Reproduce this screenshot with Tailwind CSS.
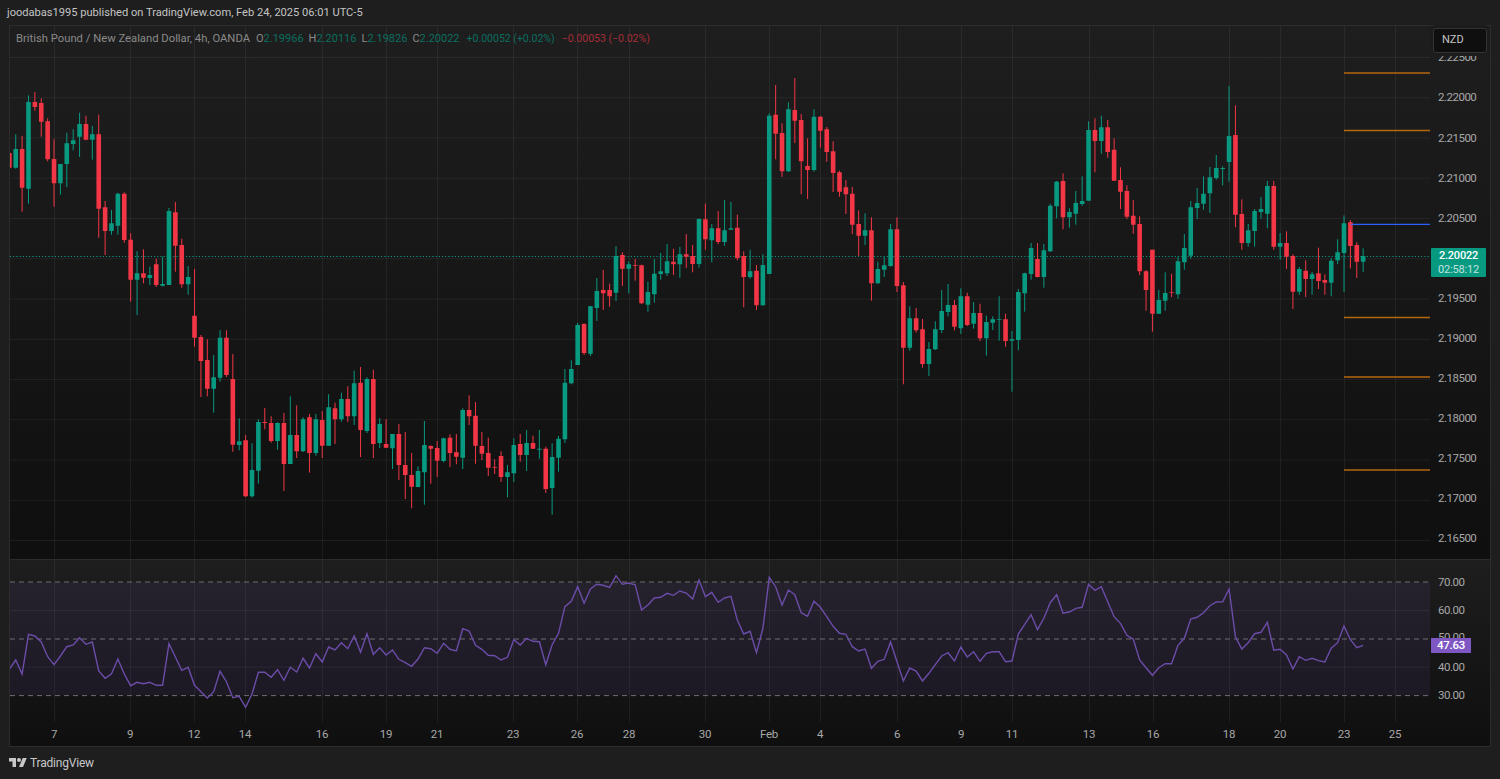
<!DOCTYPE html>
<html lang="en">
  <head>
    <meta charset="UTF-8" />
    <title>GBPNZD 4h chart</title>
    <script src="https://cdn.jsdelivr.net/npm/@tailwindcss/browser@4"></script>
  </head>
  <body class="bg-[#1e1e1e] font-['Roboto',sans-serif]">
    <div class="w-[1500px] h-[779px] overflow-hidden flex flex-col">
      <!-- published by -->
      <div class="h-[25px] pl-[7px] pt-[2px] flex items-center text-[11.1px] text-[#c4c4c4] whitespace-nowrap">
        joodabas1995 published on TradingView.com, Feb 24, 2025 06:01 UTC-5
      </div>

      <!-- chart frame -->
      <div class="relative ml-[9px] w-[1482px] h-[722px] border border-[#2c2c2c] flex flex-col">
        <!-- price pane -->
        <div class="relative h-[533px] flex bg-gradient-to-b from-[#1e1e1e] to-[#0f0f0f]">
          <svg id="priceChart" class="block shrink-0" width="1420" height="533" viewBox="10 26 1420 533">
            <g id="priceGrid" class="stroke-white/[0.06]"></g>
            <line x1="10" x2="1430" y1="256.5" y2="256.5" class="stroke-[#089981]" stroke-dasharray="1.2 2"></line>
            <path id="upWicks" class="stroke-[#089981]" fill="none"></path>
            <path id="downWicks" class="stroke-[#f23645]" fill="none"></path>
            <path id="upBodies" class="fill-[#089981]"></path>
            <path id="downBodies" class="fill-[#f23645]"></path>
            <g class="stroke-[#b5690f]" stroke-width="1.3">
              <line x1="1344" x2="1430" y1="73" y2="73"></line>
              <line x1="1344" x2="1430" y1="130.5" y2="130.5"></line>
              <line x1="1344" x2="1430" y1="317.5" y2="317.5"></line>
              <line x1="1344" x2="1430" y1="377" y2="377"></line>
              <line x1="1344" x2="1430" y1="470" y2="470"></line>
            </g>
            <line x1="1351" x2="1430" y1="224.3" y2="224.3" class="stroke-[#2962ff]" stroke-width="1.3"></line>
          </svg>

          <!-- price scale -->
          <div class="pt-[12px] pl-[8px] flex flex-col text-[11.5px] tracking-[-0.5px] text-[#a8a8a8]">
            <span class="h-[40.25px] flex items-center">2.22500</span>
            <span class="h-[40.25px] flex items-center">2.22000</span>
            <span class="h-[40.25px] flex items-center">2.21500</span>
            <span class="h-[40.25px] flex items-center">2.21000</span>
            <span class="h-[40.25px] flex items-center">2.20500</span>
            <span class="h-[40.25px]"></span>
            <span class="h-[40.25px] flex items-center">2.19500</span>
            <span class="h-[40.25px] flex items-center">2.19000</span>
            <span class="h-[40.25px] flex items-center">2.18500</span>
            <span class="h-[40.25px] flex items-center">2.18000</span>
            <span class="h-[40.25px] flex items-center">2.17500</span>
            <span class="h-[40.25px] flex items-center">2.17000</span>
            <span class="h-[40.25px] flex items-center">2.16500</span>
          </div>

          <!-- legend -->
          <div class="absolute left-[6px] top-[6px] flex text-[11px] leading-[14px] whitespace-nowrap text-[#8a8a8a]">
            <span class="text-[11.25px]">British Pound / New Zealand Dollar, 4h, OANDA</span>
            <span class="ml-[6px]">O<span class="text-[#0b6f60]">2.19966</span></span>
            <span class="ml-[5px]">H<span class="text-[#0b6f60]">2.20116</span></span>
            <span class="ml-[5px]">L<span class="text-[#0b6f60]">2.19826</span></span>
            <span class="ml-[5px]">C<span class="text-[#0b6f60]">2.20022</span></span>
            <span class="ml-[7px] text-[10.5px] text-[#0b6f60]">+0.00052 (+0.02%)</span>
            <span class="ml-[7px] text-[10.5px] text-[#a52d38]">−0.00053 (−0.02%)</span>
          </div>

          <!-- currency box -->
          <div class="absolute left-[1423px] top-[2px] w-[54px] h-[25px] pl-[8px] flex items-center rounded-[3px] border border-[#333] bg-[#0f0f0f] ring-[3px] ring-[#1c1c1c] text-[11px] text-[#c4c4c4]">
            NZD
          </div>

          <!-- last price -->
          <div class="absolute left-[1421px] top-[222px] w-[55px] h-[29px] rounded-[1px] bg-[#089981] flex flex-col items-center justify-center text-[11px] leading-[14px] tracking-[-0.2px]">
            <span class="font-medium text-white">2.20022</span>
            <span class="text-white/75">02:58:12</span>
          </div>
        </div>

        <!-- rsi pane -->
        <div class="relative h-[187px] flex border-t border-[#2c2c2c] bg-gradient-to-b from-[#1e1e1e] to-[#0f0f0f]">
          <svg id="rsiChart" class="block shrink-0" width="1420" height="186" viewBox="10 560 1420 186">
            <g id="rsiGrid" class="stroke-white/[0.06]"></g>
            <rect x="10" y="582" width="1420" height="113.6" class="fill-[#7e57c2]/[0.1]"></rect>
            <g class="stroke-[#6e6e6e]" stroke-dasharray="5 4">
              <line x1="10" x2="1430" y1="582" y2="582"></line>
              <line x1="10" x2="1430" y1="639" y2="639"></line>
              <line x1="10" x2="1430" y1="695.6" y2="695.6"></line>
            </g>
            <polyline id="rsiLine" class="stroke-[#6b4ca8]" fill="none" stroke-width="1.4"></polyline>
          </svg>

          <!-- rsi scale -->
          <div class="pt-[8px] pl-[8px] flex flex-col text-[11.5px] tracking-[-0.45px] text-[#a8a8a8]">
            <span class="h-[28.4px] flex items-center">70.00</span>
            <span class="h-[28.4px] flex items-center">60.00</span>
            <span class="h-[28.4px] flex items-center -translate-y-[1px]">50.00</span>
            <span class="h-[28.4px] flex items-center">40.00</span>
            <span class="h-[28.4px] flex items-center">30.00</span>
          </div>

          <div class="absolute left-[1421px] top-[78px] w-[40px] h-[15px] flex items-center justify-center bg-[#7e57c2] text-[11.5px] tracking-[-0.3px] font-medium text-white">
            47.63
          </div>

          <div id="timeScale" class="absolute left-0 top-[162px] h-[24px] w-[1420px] text-[11.5px] tracking-[-0.3px] text-[#a8a8a8]"></div>
        </div>
      </div>

      <!-- footer logo -->
      <div class="flex-1 pl-[9px] flex items-center gap-[3px] text-[#c8c8c8]">
        <svg class="w-[18px] h-[14px] fill-current" viewBox="0 0 36 28">
          <path d="M14 22H7V11H0V4h14v18zM28 22h-8l7.5-18h8L28 22z"></path>
          <circle cx="20" cy="8" r="4"></circle>
        </svg>
        <span class="text-[12px] tracking-[-0.2px]">TradingView</span>
      </div>
    </div>

    <script>
      // [up, body top, body bottom, wick high, wick low] read off the chart
      const first = [
        [0,189,233,153,245],[1,177,233,133,236],[0,177,293,138,365],[1,36,296,16,341],[0,36,51,6,62],
        [0,39,95,25,140],[0,94,208,85,214],[0,207,280,148,350],[1,222,280,222,314],[1,160,222,128,291],
        [1,151,162,118,181],[1,102,140,68,201],[0,102,149,77,151],[1,133,149,108,209],[0,133,356,74,443],
        [0,352,423,333,495],[1,400,423,360,434],[1,311,407,308,434],[0,311,450,307,458],[0,449,569,430,635],
        [1,550,569,484,675],[0,550,563,478,580],[1,555,564,530,585],[0,523,585,506,591],[1,582,587,500,589],
        [1,363,585,354,585],[0,367,467,336,545],[0,465,583,446,593],[1,561,583,528,614]
      ];
      const second = [
        [0,47,113,-93,140],[0,111,183,105,291],[0,180,266,118,289],[1,232,266,165,338],[1,113,233,91,245],
        [0,113,225,91,231],[0,237,434,162,455],[1,424,435,355,451],[0,421,589,405,591],[1,510,589,430,593],
        [1,366,512,358,551],[0,366,369,324,388],[0,369,423,349,428],[1,369,423,367,449],[0,369,492,339,573],
        [1,405,492,289,492],[0,405,454,316,474],[1,358,454,352,456],[0,352,459,342,518],[1,358,459,342,467],
        [0,360,437,333,474],[1,322,437,283,437],[0,325,358,308,432],[1,297,358,278,365],[0,297,349,259,366],
        [1,250,349,212,375],[0,248,390,201,471],[1,237,393,232,399],[0,237,432,209,474],[1,372,429,355,444],
        [0,432,443,358,444],[1,402,445,402,507],[0,402,495,372,540],[0,495,525,396,597],[0,525,560,459,625],
        [1,513,561,499,562],[1,435,517,363,614],[0,438,446,436,551],[0,444,482,423,531],[1,415,483,413,487],
        [0,413,459,403,501],[0,457,470,402,493],[1,330,473,325,507],[0,330,349,286,375],[0,347,437,306,491],
        [0,438,461,396,480],[0,459,503,413,528],[0,501,503,478,522],[0,468,531,454,546],[1,517,531,495,592],
        [1,435,520,415,546],[0,432,465,402,485],[1,429,465,390,513],[0,429,446,407,447],[1,446,449,390,476],
        [0,446,567,440,579],[1,471,564,430,644],[1,416,473,408,515],[1,248,418,207,429],[1,207,250,181,253],
        [1,75,195,68,195]
      ];
      const third = [
        [0,762,849,760,855],[1,709,851,708,858],[1,663,714,624,753],[0,660,670,600,720],[0,660,679,641,710],
        [1,558,668,528,693],[0,555,596,547,648],[1,583,596,574,670],[0,586,588,567,632],[0,586,700,584,702],
        [1,666,704,635,725],[1,611,673,567,698],[1,604,612,549,629],[1,574,610,522,618],[0,575,583,536,615],
        [1,553,583,531,623],[0,553,560,492,594],[0,558,582,525,607],[1,447,582,445,593],[0,448,508,401,539],
        [1,475,511,462,577],[0,475,516,423,522],[1,481,516,390,527],[1,475,479,396,479],[0,473,564,434,571],
        [0,558,621,544,712],[1,604,621,539,626],[0,602,706,585,720],[1,585,706,553,707],[1,137,612,130,612],
        [0,134,191,45,268],[0,189,304,160,321],[1,118,304,97,306],[0,120,152,24,219],[0,150,274,132,373],
        [0,288,300,205,387],[1,140,300,118,305],[0,140,182,138,233],[0,178,246,171,275],[0,244,309,214,366],
        [0,307,365,302,380],[0,352,373,330,432],[0,371,464,351,492],[0,462,497,421,558],[1,481,497,430,525],
        [0,481,640,442,692],[1,597,640,575,642],[1,586,599,561,621],[1,478,588,462,590],[0,478,648,442,666],
        [0,646,833,636,943],[1,745,833,709,842],[0,745,781,714,788],[0,778,882,747,893],[1,837,882,816,918],
        [1,778,838,754,840],[1,723,780,660,789],[1,705,726,642,739],[0,705,770,690,781],[1,679,775,655,792],
        [0,679,765,668,768],[1,729,761,696,776],[0,729,805,701,813],[1,756,805,737,857],[1,748,758,739,780],
        [1,748,750,679,812],[0,748,813,731,830],[1,808,812,783,965],[1,666,810,657,841],[1,610,670,608,725],
        [1,534,612,519,629],[0,567,621,519,622],[1,541,621,522,653],[1,407,544,401,546],[1,335,409,333,445],
        [0,333,442,310,478],[1,426,442,415,473],[1,399,431,363,464],[1,393,402,319,407],[1,180,392,154,392],
        [0,180,213,145,307],[1,172,213,137,251],[0,172,246,150,263],[0,239,332,205,333],[0,330,365,292,417],
        [0,363,440,346,447],[0,437,464,390,491],[0,462,604,439,615],[0,604,660,600,722],[0,539,731,539,785],
        [1,690,731,660,732],[1,669,692,607,722],[0,666,668,611,681],[1,574,673,560,686],[1,534,577,492,599],
        [1,412,557,393,566],[1,399,414,354,447],[1,371,401,319,419],[1,322,370,291,429],[1,294,324,255,329],
        [1,294,297,289,346],[1,198,276,48,335],[0,195,434,106,472],[0,432,519,388,539],[1,481,519,462,530],
        [1,423,483,417,530],[1,417,426,381,446],[1,348,431,333,475],[0,348,530,333,539],[1,519,530,489,569],
        [0,519,560,484,597],[0,558,665,553,717],[1,597,665,591,674],[0,602,627,571,681],[1,613,627,606,674],
        [0,610,633,533,657],[0,630,638,613,674],[1,572,638,564,679],[1,547,571,508,582],[1,460,549,436,666],
        [0,457,528,450,595],[0,525,575,517,624],[1,558,575,535,606]
      ];
      const rsiA = [358,330,372,253,258,276,320,344,318,290,285,263,283,276,363,385,371,327,372,407,397,401,397,406,406,281,321,361,352,406,425,444,425,364,395,443,439,472,432,367,367,382,359,391,352,366,325,354,311,336,291,300,278,296,258,307,251,313,293];
      const rsiB = [255,240,268,278,289,267,233,236,250,220,238,243,176,183,226,238,256,257,270,262,209,225,205,214,215,284,224,190,110,94,50,100,57,43,46,52,17,43,39,44,120,105,84,82,70,76,63,69,87,30,80,67,97,84,79,150,192,184,248,175,22,50,105,60,74,128,139,94,112,140,169,190,193,230,243,237,295,274,268,216,275,333,294,303,333,310,284,258,248,273,231,261,245,274,250,245,245,275,273,192,163,134,179,145,98,74,130,126,115,112,43,61,50,95,140,160,196,208,270,293,316,293,281,281,226,205,147,142,128,107,96,95,57];
      const rsiC = [260,297,278,251,247,217,301,298,315,357,320,331,325,332,336,295,278,228,269,293,286];

      const step = 6.386;
      const xAt = (i) => 9.33 + step * i;
      const ticks = [[54,"7"],[130,"9"],[194,"12"],[245,"14"],[322,"16"],[386,"19"],[437,"21"],[513,"23"],[577,"26"],[629,"28"],[705,"30"],[769,"Feb"],[820,"4"],[897,"6"],[961,"9"],[1012,"11"],[1089,"13"],[1153,"16"],[1229,"18"],[1280,"20"],[1344,"23"],[1395,"25"]];
      const svgNs = "http://www.w3.org/2000/svg";

      function addLine(parent, x1, y1, x2, y2) {
        const line = document.createElementNS(svgNs, "line");
        line.setAttribute("x1", x1);
        line.setAttribute("y1", y1);
        line.setAttribute("x2", x2);
        line.setAttribute("y2", y2);
        parent.appendChild(line);
      }

      // grid
      const priceGrid = document.getElementById("priceGrid");
      const rsiGrid = document.getElementById("rsiGrid");
      const timeScale = document.getElementById("timeScale");
      for (let n = 0; n < 13; n++) {
        const y = 57.5 + n * 40.25;
        addLine(priceGrid, 10, y, 1430, y);
      }
      addLine(rsiGrid, 10, 610.5, 1430, 610.5);
      addLine(rsiGrid, 10, 667, 1430, 667);
      ticks.forEach(([x, text]) => {
        addLine(priceGrid, x + 0.5, 26, x + 0.5, 559);
        addLine(rsiGrid, x + 0.5, 560, x + 0.5, 722);
        const label = document.createElement("span");
        label.className = "absolute top-[4px] -translate-x-1/2";
        label.style.left = x - 10 + "px";
        label.textContent = text;
        timeScale.appendChild(label);
      });

      // candles
      const paths = { upWicks: "", downWicks: "", upBodies: "", downBodies: "" };
      let index = 0;
      function addCandles(rows, base) {
        rows.forEach(([up, top, bottom, high, low]) => {
          const x = xAt(index++);
          const y = (v) => (base + v / 3).toFixed(1);
          const name = up ? "up" : "down";
          paths[name + "Wicks"] += `M${x.toFixed(2)} ${y(high)}V${y(low)}`;
          paths[name + "Bodies"] += `M${(x - 2.3).toFixed(2)} ${y(top)}h4.6V${y(bottom)}h-4.6z`;
        });
      }
      addCandles(first, 90);
      addCandles(second, 300);
      addCandles(third, 70);
      Object.keys(paths).forEach((id) => document.getElementById(id).setAttribute("d", paths[id]));

      // rsi
      const rsiY = [
        ...rsiA.map((v) => 550 + v / 3),
        ...rsiB.map((v) => 570 + v / 3),
        ...rsiC.map((v) => 550 + v / 3),
      ];
      document.getElementById("rsiLine").setAttribute(
        "points",
        rsiY.map((y, i) => `${xAt(i).toFixed(2)},${y.toFixed(1)}`).join(" ")
      );
    </script>
  </body>
</html>
